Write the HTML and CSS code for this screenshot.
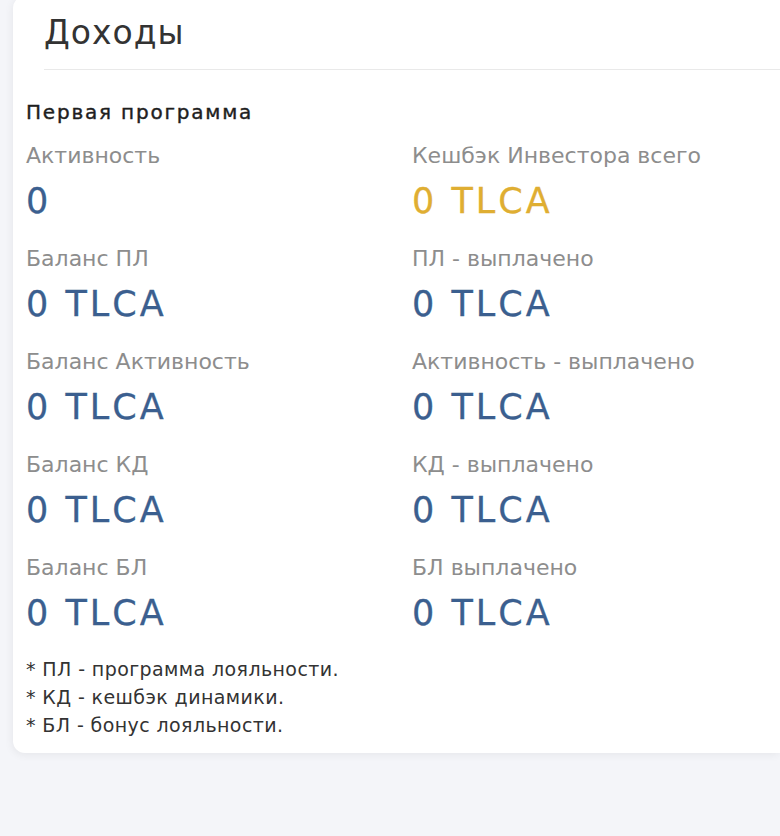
FILE: index.html
```html
<!DOCTYPE html>
<html lang="ru">
<head>
  <meta charset="UTF-8">
  <meta name="viewport" content="width=device-width, initial-scale=1.0">
  <title>Доходы</title>
  <link rel="stylesheet" href="styles.css">
</head>
<body>
    <div class="card">
        <div class="card-header">
            <h2 class="card-title">Доходы</h2>
        </div>
        <div class="card-body">
            <h3 class="program-title">Первая программа</h3>
            <div class="stats">
                <div class="stat">
                    <div class="stat-label">Активность</div>
                    <div class="stat-value">0</div>
                </div>
                <div class="stat">
                    <div class="stat-label">Кешбэк Инвестора всего</div>
                    <div class="stat-value gold">0 TLCA</div>
                </div>
                <div class="stat">
                    <div class="stat-label">Баланс ПЛ</div>
                    <div class="stat-value">0 TLCA</div>
                </div>
                <div class="stat">
                    <div class="stat-label">ПЛ - выплачено</div>
                    <div class="stat-value">0 TLCA</div>
                </div>
                <div class="stat">
                    <div class="stat-label">Баланс Активность</div>
                    <div class="stat-value">0 TLCA</div>
                </div>
                <div class="stat">
                    <div class="stat-label">Активность - выплачено</div>
                    <div class="stat-value">0 TLCA</div>
                </div>
                <div class="stat">
                    <div class="stat-label">Баланс КД</div>
                    <div class="stat-value">0 TLCA</div>
                </div>
                <div class="stat">
                    <div class="stat-label">КД - выплачено</div>
                    <div class="stat-value">0 TLCA</div>
                </div>
                <div class="stat">
                    <div class="stat-label">Баланс БЛ</div>
                    <div class="stat-value">0 TLCA</div>
                </div>
                <div class="stat">
                    <div class="stat-label">БЛ выплачено</div>
                    <div class="stat-value">0 TLCA</div>
                </div>
            </div>
            <div class="notes">
                <div>* ПЛ - программа лояльности.</div>
                <div>* КД - кешбэк динамики.</div>
                <div>* БЛ - бонус лояльности.</div>
            </div>
        </div>
    </div>
</body>
</html>
```

FILE: styles.css
```css
body {
  margin: 0;
  overflow: hidden;
  height: 100vh;
  background: #f4f5f9;
  font-family: "DejaVu Sans", "Open Sans", sans-serif;
}

/* card runs on past the right edge of the window */
.card {
  width: calc(100% - 13px);
  margin-left: 13px;
  margin-top: -4px;
  background: #fff;
  border-radius: 12px 0 0 12px;
  box-shadow: -1px 2px 8px rgba(0, 0, 0, 0.06);
}

.card-header {
  margin-left: 31px;
  padding-top: 17px;
  padding-bottom: 16px;
  border-bottom: 1px solid #e9e9e9;
}

.card-title {
  margin: 0;
  font-size: 33px;
  font-weight: normal;
  line-height: 40px;
  letter-spacing: 1px;
  color: #333;
}

.card-body {
  padding: 30px 0 14px 13px;
}

.program-title {
  margin: 0 0 19px 0;
  font-size: 20px;
  font-weight: normal;
  line-height: 24px;
  letter-spacing: 1.8px;
  color: #1e1e1e;
  -webkit-text-stroke: 0.4px #1e1e1e;
}

.stats {
  display: grid;
  grid-template-columns: 386px 1fr;
  row-gap: 23px;
}

.stat-label {
  font-size: 22px;
  line-height: 26px;
  color: #8d8d8d;
}

.stat-value {
  margin-top: 10px;
  font-size: 35px;
  line-height: 44px;
  color: #3b5f8f;
  letter-spacing: 3px;
  -webkit-text-stroke: 0.3px #3b5f8f;
}

.stat-value.gold {
  color: #dfae32;
  -webkit-text-stroke-color: #dfae32;
}

.notes {
  margin-top: 20px;
  font-size: 19px;
  line-height: 28px;
  letter-spacing: 0.4px;
  color: #333;
}
```
